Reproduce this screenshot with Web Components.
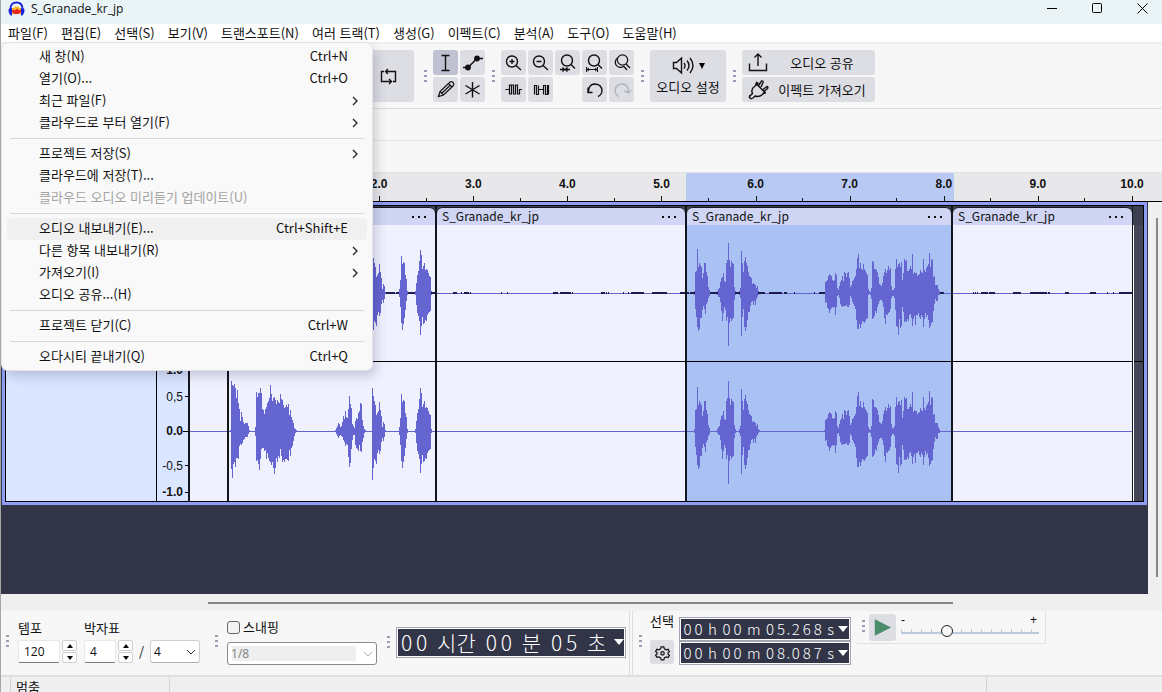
<!DOCTYPE html>
<html lang="ko">
<head>
<meta charset="utf-8">
<title>S_Granade_kr_jp</title>
<style>
html,body{margin:0;height:100%}
body{font:13px/18px "Noto Sans CJK KR",sans-serif;color:#111;overflow:hidden}
</style>
</head>
<body>
<audio-app></audio-app>
<script>
const define = (name, html, setup) => {
  const t = document.createElement('template');
  t.innerHTML = '<style>*{box-sizing:border-box}:host{display:block;box-sizing:border-box}button,input,select{font:inherit;color:inherit;margin:0;padding:0;border:0;background:none;outline:0}svg{display:block}</style>' + html;
  customElements.define(name, class extends HTMLElement {
    constructor(){
      super();
      this.attachShadow({mode:'open'}).append(t.content.cloneNode(true));
    }
    connectedCallback(){ if (setup && !this.ready){ this.ready = true; setup(this, this.shadowRoot); } }
  });
};

/* Toolbar grip: two columns of three dots */
define('drag-grip', `<style>
:host{width:7px;height:13px;flex:none;
background:conic-gradient(from 90deg at 2px 2px,transparent 0 270deg,#9c9cb4 0) 0 0/5px 5px}
</style>`);

/* Icons */
const ICONS = {
  loop:['0 0 25 25','<path d="M8 7.500H5.500V17.500H15.500M17 17.500H19.500V7.500H9.500M12 5 9.500 7.500l2.500 2.500M13 15l2.500 2.500-2.500 2.500"/>'],
  beam:['0 0 25 25','<path d="M8.500 5.500h8M8.500 20.500h8M12.500 5.500v15"/>'],
  envelope:['0 0 25 25','<path d="M3 17.500h5l9-9h6"/><g fill="currentColor"><circle cx="8" cy="17.500" r="2.200"/><circle cx="17" cy="8.500" r="2.200"/></g>'],
  pencil:['0 0 25 25','<g stroke-width="1.200"><path d="M5.500 19.500l1.500-5L17 5q1.500-1 3 .5t.5 3L10.500 18zM7 14.500l3.500 3.500M15.500 6.500l3.500 3.500M9 16l8-7.500"/></g>'],
  multi:['0 0 25 25','<path d="M12.500 5v15.500M5.500 8.500l14 8.500M19.500 8.500l-14 8.500"/>'],
  zoomin:['0 0 25 25','<circle cx="11" cy="11.500" r="5.500"/><path d="M15 15.500l5 4.500M8.500 11.500h5M11 9v5"/>'],
  zoomout:['0 0 25 25','<circle cx="11" cy="11.500" r="5.500"/><path d="M15 15.500l5 4.500M8.500 11.500h5"/>'],
  zoomsel:['0 0 25 25','<circle cx="12" cy="10.500" r="5.500"/><path d="M16 14.500l4 4M5 19.500h4M15 19.500h-4M7.500 17.500l2 2-2 2M12.500 17.500l-2 2 2 2"/>'],
  zoomfit:['0 0 25 25','<circle cx="12" cy="10.500" r="5.500"/><path d="M16 14.500l4 4"/><path stroke-width="1" d="M5 19.500h10M4.500 17v5M15.500 17v5M7 18l-2 1.500 2 1.500M13 18l2 1.500-2 1.500"/>'],
  zoomtog:['0 0 25 25','<g stroke-width="1.200"><circle cx="13.500" cy="10" r="5.200"/><path d="M17 14l4 4M8.500 8a5 5 0 1 0 6 8.500M14.500 16l3.500 4"/></g>'],
  trim:['0 0 25 25','<path stroke-width="1.200" d="M4.500 12.500h4v4.500h2v-9h2v9h2v-9h2v9h2v-4.500H21M8.500 13V8h2"/>'],
  silence:['0 0 25 25','<path stroke-width="1.200" d="M6.500 17.500v-9h2v9h2v-9h0v4h5v-4h2v9h2v-9h1v9M10.500 12.500v5M15.500 12.500v5"/>'],
  undo:['0 0 25 25','<path d="M6 10.500v5h4.500M6.500 15q0-8 6.500-8 7 .5 7 7-.5 4-4 5.500"/>'],
  redo:['0 0 25 25','<path d="M22 13l-2.500 3-4-2M19.500 15.500q0-8.500-6.500-8.500-7 .5-7 7 .5 4 4 5.500"/>'],
  speaker:['0 0 25 25','<path d="M2.500 9.500h3l5-4.500v15l-5-4.500h-3zM13 10q2 2.500 0 5.500M16 7.500q4 5 0 10M19 5q6 7.500 0 15"/>'],
  share:['0 0 25 25','<path d="M4.500 13.500v7h17v-7M13 16V4M9.500 7.500 13 4l3.500 3.500"/>'],
  plug:['0 0 25 25','<path d="M4.500 20.500q-.5-1.500 1.500-2.500l1.500-1.500q-2-4.500 2-7L12 7.500l7.500 7.500-2 2.500q-3.500 3-7.500 1.500l-2 2q-2 1.500-3.500-.5zM13.500 8.500l3-4.500q2-.5 1.500 1.500l-2 4.500M18 12.500l4-3q1.500.5.500 2l-3.500 3M10.500 8.500l1-3 2 1M18.500 16.500l2.500-1"/>'],
  gear:['-2 -2 29 29','<path d="M11 6h3l.7 2.300 2 1.100 2.300-.6 1.500 2.600-1.700 1.600v1.200l1.700 1.500-1.500 2.600-2.300-.6-2 1.100L14 21h-3l-.7-2.300-2-1.100-2.300.6-1.500-2.600 1.700-1.500v-1.200l-1.700-1.600L6 8.800l2.300.6 2-1.100z"/><circle cx="12.500" cy="13.500" r="2"/>'],
  play:['0 0 25 25','<path d="M5.500 5.500v14l14-7z" fill="#4a8c6c" stroke="#4a8c6c"/>']
};
define('tool-icon', `<style>:host{width:25px;height:25px;flex:none}</style><svg width="25" height="25" fill="none" stroke="currentColor" stroke-width="1.400"></svg>`,
(el, r) => { const [vb, p] = ICONS[el.getAttribute('name')]; const s = r.querySelector('svg'); s.setAttribute('viewBox', vb); s.innerHTML = p; });

define('tool-button', `<style>
:host{width:25px;height:25px}
button{width:100%;height:100%;background:#dddee4;border-radius:3px;display:flex;align-items:center;justify-content:center}
:host([on]) button{background:#bfc1d0}
:host([off]) button{color:#b3b4bd}
</style><button><slot></slot></button>`,
(el, r) => r.querySelector('button').setAttribute('aria-label', el.getAttribute('label')));

/* Window chrome */
define('title-bar', `<style>
:host{display:flex;height:24px;padding:0 14px 6px 7px;align-items:center;background:#eaf4f7;font:12px/18px "Open Sans","Noto Sans",sans-serif}
span{margin-left:6px;flex:1}
div{display:flex;gap:34px}
button{width:11px;height:12px}
</style>
<svg width="17" height="16" viewBox="0 0 17 16"><path d="M3 9q1-3 3-2l1.500-2 1 1 1.500-1 1.500 2q2-1 3 3v3H3z" fill="#ffb52e"/><path d="M3.500 10l2-1.500 1.500 1 2-2 2 2 2-1 1 2-4 2.500H6z" fill="#e8261c"/><path d="M2.500 8Q2.500 1.500 8.500 1.500T14.500 8" fill="none" stroke="#1a22dc" stroke-width="1.800"/><path d="M1 7.500l3-.5v7.500H2.500Q-.5 11 1 7.500zM16 7.500l-3-.5v7.500h1.500q3-3.500 1.500-7z" fill="#1a22dc"/></svg>
<span>S_Granade_kr_jp</span>
<div>
<button aria-label="최소화"><svg width="11" height="12"><path d="M0 5.500h10" stroke="#000"/></svg></button>
<button aria-label="최대화"><svg width="11" height="12"><rect x=".5" y=".5" width="9" height="9" rx="1" fill="none" stroke="#000"/></svg></button>
<button aria-label="닫기"><svg width="11" height="12"><path d="M.5 .5l10 10M10.500 .5l-10 10" stroke="#000"/></svg></button>
</div>`);

define('menu-bar', `<style>
:host{display:flex;height:20px;background:#fff;border-bottom:2px solid #efefef}
button{padding:0 6px 0 7px;height:18px;line-height:18px;white-space:nowrap}
button:first-child{background:#f9f9f9}
</style>`, (el, r) => {
  for (const n of ['파일(F)','편집(E)','선택(S)','보기(V)','트랜스포트(N)','여러 트랙(T)','생성(G)','이펙트(C)','분석(A)','도구(O)','도움말(H)']){
    const b = document.createElement('button'); b.textContent = n; r.append(b);
  }
});

define('menu-item', `<style>
:host{margin:0 5px}
button{display:flex;width:100%;height:22px;align-items:center;padding:0 8px 2px 32px;border-radius:4px;text-align:left;white-space:nowrap}
:host([current]) button{background:#f0f0f0}
:host([disabled]) button{color:#a3a3a3}
span{flex:1}
kbd{font:inherit;margin-right:11px}
svg{display:none;margin-top:2px}
:host([sub]) svg{display:block}
:host([sub]) kbd{display:none}
</style><button><span><slot></slot></span><kbd></kbd><svg width="8" height="10" viewBox="0 0 8 10"><path d="M2 1l4 4-4 4" fill="none" stroke="#222" stroke-width="1.300"/></svg></button>`,
(el, r) => { const k = el.getAttribute('keys'); k ? r.querySelector('kbd').textContent = k : r.querySelector('kbd').remove(); });

define('file-menu', `<style>
:host{position:absolute;left:1px;top:43px;width:370px;padding:3px 0 2px;background:#f9f9f9;border-radius:6px;box-shadow:0 0 0 1px #e3e3e6,4px 6px 12px rgba(0,0,40,.18);z-index:2}
hr{margin:4px 8px;border:0;height:1px;background:#d8d8d8}
</style>
<menu-item keys="Ctrl+N">새 창(N)</menu-item>
<menu-item keys="Ctrl+O">열기(O)...</menu-item>
<menu-item sub>최근 파일(F)</menu-item>
<menu-item sub>클라우드로 부터 열기(F)</menu-item>
<hr>
<menu-item sub>프로젝트 저장(S)</menu-item>
<menu-item>클라우드에 저장(T)...</menu-item>
<menu-item disabled>클라우드 오디오 미리듣기 업데이트(U)</menu-item>
<hr>
<menu-item current keys="Ctrl+Shift+E">오디오 내보내기(E)...</menu-item>
<menu-item sub>다른 항목 내보내기(R)</menu-item>
<menu-item sub>가져오기(I)</menu-item>
<menu-item>오디오 공유...(H)</menu-item>
<hr>
<menu-item keys="Ctrl+W">프로젝트 닫기(C)</menu-item>
<hr>
<menu-item keys="Ctrl+Q">오다시티 끝내기(Q)</menu-item>`);

/* Top toolbars */
define('tool-bars', `<style>
:host{background:#f7f7f7}
.row{display:flex;align-items:center;height:65px;border-bottom:1px solid #dcdce2;gap:4px}
.blank{height:32px;border-bottom:1px solid #e2e2e6}
.transport{width:413px;display:flex;justify-content:flex-end;margin-right:4px}
.transport tool-button{width:52px;height:52px}
.grid{display:grid;grid-auto-flow:column;grid-template-rows:25px 25px;gap:2px}
.grid.tools,.grid.edit,.setup{margin-right:1px}
.setup{width:76px;height:52px}
.col{display:flex;flex-direction:column;align-items:center;padding-bottom:3px}
.col>div{display:flex;align-items:center;gap:3px}
.col>span{line-height:18px}
.wide{width:133px}
.wide span{flex:1;text-align:center}
.wide tool-icon{margin-left:3px}
.in{display:flex;width:133px;align-items:center;padding-right:1px}
</style>
<div class="row">
 <div class="transport"><tool-button label="반복"><tool-icon name="loop"></tool-icon></tool-button></div>
 <drag-grip></drag-grip>
 <div class="grid tools">
  <tool-button on label="선택 도구"><tool-icon name="beam"></tool-icon></tool-button>
  <tool-button label="그리기"><tool-icon name="pencil"></tool-icon></tool-button>
  <tool-button label="엔벨로프"><tool-icon name="envelope"></tool-icon></tool-button>
  <tool-button label="멀티 도구"><tool-icon name="multi"></tool-icon></tool-button>
 </div>
 <drag-grip></drag-grip>
 <div class="grid edit">
  <tool-button label="확대"><tool-icon name="zoomin"></tool-icon></tool-button>
  <tool-button label="잘라내기"><tool-icon name="trim"></tool-icon></tool-button>
  <tool-button label="축소"><tool-icon name="zoomout"></tool-icon></tool-button>
  <tool-button label="무음"><tool-icon name="silence"></tool-icon></tool-button>
  <tool-button label="선택 맞춤"><tool-icon name="zoomsel"></tool-icon></tool-button>
  <i></i>
  <tool-button label="창 맞춤"><tool-icon name="zoomfit"></tool-icon></tool-button>
  <tool-button label="실행 취소"><tool-icon name="undo"></tool-icon></tool-button>
  <tool-button label="확대 전환"><tool-icon name="zoomtog"></tool-icon></tool-button>
  <tool-button off label="다시 실행"><tool-icon name="redo"></tool-icon></tool-button>
 </div>
 <drag-grip></drag-grip>
 <tool-button class="setup" label="오디오 설정"><div class="col"><div><tool-icon name="speaker"></tool-icon><svg width="6" height="6"><path d="M0 0h6L3 6z"/></svg></div><span>오디오 설정</span></div></tool-button>
 <drag-grip></drag-grip>
 <div class="grid">
  <tool-button class="wide" label="오디오 공유"><div class="in"><tool-icon name="share"></tool-icon><span>오디오 공유</span></div></tool-button>
  <tool-button class="wide" label="이펙트 가져오기"><div class="in"><tool-icon name="plug"></tool-icon><span>이펙트 가져오기</span></div></tool-button>
 </div>
</div>
<div class="blank"></div>
<div class="blank"></div>`);

/* Timeline */
define('time-ruler', `<style>
:host{--s:calc(100% - 220px);display:grid;grid-template-columns:190px repeat(10,1fr) 30px;height:29px;border-bottom:1px solid #000;
font:bold 12px/14px "Liberation Sans",sans-serif;
background:linear-gradient(90deg,transparent calc(190px + var(--s)*.526),#b8caf4 0 calc(190px + var(--s)*.8105),transparent 0) #e8e8ea}
div{background:linear-gradient(#111,#111) 0 100%/1px 5px no-repeat,linear-gradient(#111,#111) 50% 100%/1px 3px no-repeat}
div:first-child,div:nth-child(2){background:none}
div:last-child{background:linear-gradient(#111,#111) 0 100%/1px 5px no-repeat}
span{display:block;width:40px;margin:4px 0 0 -20px;text-align:center}
</style>`, (el, r) => {
  for (const n of ['','','','2.0','3.0','4.0','5.0','6.0','7.0','8.0','9.0','10.0']){
    const d = document.createElement('div');
    if (n){ const s = document.createElement('span'); s.textContent = n; d.append(s); }
    r.append(d);
  }
});

/* Peak data: "start:up/down,up/down,..." per burst, one pair per column */
const WAVES = {
 a:'1:1/1,50/38,46/47,45/33,47/31,43/36,33/27,41/27,28/28,22/15,10/13,19/14,14/12,9/9,7/8,8/6,8/6,8/6,5/3,1/1;26:4/5,39/30,34/29,38/33,38/39,43/28,38/18,22/17,21/17,17/20,22/19,24/28,28/22,30/27,33/30,46/31,37/34,30/31,33/37,34/43,31/37,27/27,31/31,29/25,28/27,37/18,32/25,31/31,26/29,23/31,24/28,26/28,24/29,27/30,16/19,21/25,14/17,11/15,8/10,3/5,2/2,1/1;106:1/1,3/3,5/5,8/7,7/5,4/4,5/5,9/6,15/9,12/11,20/15,14/13,13/14,22/26,35/36,27/32,23/18,7/9,5/4,3/4,10/14,13/17,12/18,18/20,20/14,28/20,27/21,11/11,5/7,2/2,1/1;143:43/49,35/37,30/28,26/30,16/33,18/22,20/19,29/23,21/20,15/11,4/7,9/10,7/6,1/1;170:4/4,13/14,37/30,29/37,31/31,30/25,18/17,14/8,2/2;186:2/2,10/12,18/20,22/23,32/28,43/42,38/33,24/24,27/31,30/30,23/27,24/28,23/22,20/20,17/19,16/18,2/2',
 b:'7:2/2,21/16,22/24,44/34,26/38,30/36,28/25,26/25,15/17,20/13,30/16,30/21,21/11,17/9,6/5,3/3;30:2/2,4/4,5/4,11/9,15/18,16/28,20/20,12/14,11/17,30/28,33/24,50/53,33/30,26/25,32/28,30/26,29/25,6/7,2/2;52:2/2,5/5,42/43,30/24,21/16,32/34,36/38,30/34,27/27,21/19,17/19,16/13,15/9,9/8,10/12,9/8,8/12,5/6,7/4,2/2,1/1;137:1/1,11/10,12/9,13/15,17/16,19/20,18/17,17/15,13/14,12/15,13/14,20/22,18/14,5/3,3/2,7/5,11/11,13/13,17/14,12/13,21/13,20/13,16/12,20/14,21/14,15/12,6/3,8/5,12/9,13/11,15/13,17/16,24/27,35/36,39/36,25/31,30/35,24/31,23/28,29/29,24/30,22/28,20/26,18/25,4/2,2/1,1/2,5/6,32/26,31/25,24/23,24/18,23/20,21/14,16/11,9/8,8/7,7/7,10/9,17/14,21/25,24/31,20/21,23/22,27/20,23/19,25/16,7/5,3/3,3/3,5/5,24/17,34/33,26/34,29/42,30/26,26/35,31/33,13/14,20/19,34/29,32/28,33/29,22/26,22/28,24/22,27/21,24/25,39/33,19/26,21/23,20/32,20/22,17/22,18/20,19/24,23/26,21/22,20/24,34/34,23/26,21/20,25/24,27/22,29/27,40/35,26/33,34/30,33/29,16/18,17/11,8/6,8/8,8/8,4/2,2/2'
};
const wavePath = s => s ? s.split(';').map(b => {
  const [x, pts] = b.split(':'); let i = +x;
  return pts.split(',').map(p => { const [u, d] = p.split('/').map(Number); return `M${i++} ${-u}h1V${d}h-1z`; }).join('');
}).join('') : '';
const dashes = s => s.split(' ').map(p => { const [x, w] = p.split('+'); return `M${x} -1h${w}v2h-${w}z`; }).join('');

define('audio-clip', `<style>
:host{display:flex;flex-direction:column;min-width:0;border-left:2px solid #14161e}
header{display:flex;flex:none;align-items:center;height:18px;margin-top:1px;padding:0 7px 2px 5px;border-top:1px solid #14161e;border-radius:6px 6px 0 0;background:#cfd5f2;white-space:nowrap;overflow:hidden}
span{flex:1;font-size:12px;line-height:16px}
button{display:flex;gap:4px;padding:7px 2px 5px}
i{width:2px;height:2px;background:#111}
section{background:#eff1ff;height:136px}
section+section{height:140px;border-top:1px solid #000}
:host([selected]) section{background:#aac2f3}
svg{width:100%;height:100%}
</style>
<header><span></span><button aria-label="클립 메뉴"><i></i><i></i><i></i></button></header>
<section><svg preserveAspectRatio="none" shape-rendering="crispEdges"><path class="w" fill="#6565d2"/><path class="d" fill="#1c1c50"/></svg></section>
<section><svg preserveAspectRatio="none" shape-rendering="crispEdges"><path class="w" fill="#6565d2"/></svg></section>`,
(el, r) => {
  const w = +el.getAttribute('span');
  el.style.flex = `${w} 1 0`;
  r.querySelector('span').textContent = el.getAttribute('name') || '';
  const d = wavePath(WAVES[el.getAttribute('wave')]) + `M0 0H${w}v1H0z`;
  r.querySelectorAll('svg').forEach((s, i) => s.setAttribute('viewBox', i ? `0 -69 ${w} 139` : `0 -68 ${w} 136`));
  r.querySelectorAll('.w').forEach(p => p.setAttribute('d', d));
  r.querySelector('.d').setAttribute('d', dashes(el.getAttribute('dash')));
});

define('amp-ruler', `<style>
:host{display:grid;grid-template-rows:18fr 35fr 34fr 35fr 18fr;font:12px/14px "Liberation Sans",sans-serif;height:140px}
div{display:flex;align-items:center;justify-content:flex-end;gap:2px}
div::after{content:"";width:3px;height:1px;background:#000}
.b{font-weight:bold}
.m::after{width:5px}
.m{gap:0}
</style>
<div class="b">1.0</div><div>0,5</div><div class="b m">0.0</div><div>-0,5</div><div class="b">-1.0</div>`);

define('track-view', `<style>
:host{display:flex;min-height:0;background:#323547}
.canvas{flex:1;min-width:0}
.track{display:grid;grid-template-columns:151px 34px 1fr;border:3px solid #8f9df6;margin:0 1px 0 1px;height:303px;background:#3d404f}
.panel,.amp{background:#dae6ff;border:1px solid #000;border-right:0}
.amp{display:flex;flex-direction:column;justify-content:flex-end;border-right:2px solid #14161e}
.wave{display:flex;min-width:0;border:solid #000;border-width:1px 1px 1px 0}
.lead{width:37px;margin-top:19px;background:#eff1ff;display:flex;flex-direction:column}
.lead i{height:136px;background:linear-gradient(#6565d2,#6565d2) 0 68px/100% 1px no-repeat}
.lead i+i{height:140px;border-top:1px solid #000;background-position:0 69px}
.tail{width:10px;margin-top:19px;background:#454759;border-left:1px solid #fff}
.tail::after{content:"";display:block;margin-top:136px;height:1px;background:#000}
.wave audio-clip:last-of-type{border-right:1px solid #14161e}
.bar{width:14px;background:#efefef;padding:16px 4px 17px 8px}
.bar div{height:100%;background:#868686}
</style>
<div class="canvas"><div class="track">
<div class="panel"></div>
<div class="amp"><amp-ruler></amp-ruler></div>
<div class="wave">
<div class="lead"><i></i><i></i></div>
<audio-clip span="206" wave="a" dash="157+9 167+3 179+7 202+4"></audio-clip>
<audio-clip name="S_Granade_kr_jp" span="248" dash="16+4 24+1 27+5 33+1 64+1 70+1 116+5 123+11 135+1 164+4 169+1 171+1 186+1 191+1 194+13 215+15 243+5"></audio-clip>
<audio-clip name="S_Granade_kr_jp" span="264" wave="b" selected dash="0+2 3+5 23+8 48+5 71+7 82+13 97+3 107+1 127+1 132+6 253+4"></audio-clip>
<audio-clip name="S_Granade_kr_jp" span="179" dash="20+1 22+1 24+1 28+7 36+6 60+8 77+17 95+2 112+4 137+6 154+1 160+1 166+13"></audio-clip>
<div class="tail"></div>
</div>
</div></div>
<div class="bar"><div></div></div>`);

define('h-scroll', `<style>
:host{height:17px;background:#efefef;padding:8px 209px 0 207px}
div{height:2px;background:#868686}
</style><div></div>`);

/* Bottom controls */
define('spin-field', `<style>
:host{display:flex;gap:2px}
input{width:var(--w,42px);height:23px;background:#fff;border:1px solid #e8e8e8;border-bottom:1px solid #7b7b7b;border-radius:2px;padding-left:5px;font:12px/18px "Open Sans",sans-serif}
div{display:flex;flex-direction:column;gap:1px}
button{width:15px;height:11px;background:#fdfdfd;border:1px solid #cfcfcf;border-radius:2px;display:flex;align-items:center;justify-content:center}
</style><input type="text"><div><button aria-label="증가"><svg width="6" height="4"><path d="M0 4l3-4 3 4z"/></svg></button><button aria-label="감소"><svg width="6" height="4"><path d="M0 0l3 4 3-4z"/></svg></button></div>`,
(el, r) => { const i = r.querySelector('input'); i.value = el.getAttribute('value'); i.setAttribute('aria-label', el.getAttribute('label')); });

define('drop-select', `<style>
:host{position:relative;height:23px}
select{appearance:none;display:block;width:100%;height:100%;background:#fff;border:1px solid #d0d0d0;border-bottom-color:#b0b0b0;border-radius:3px;padding-left:3px;font:12px/18px "Open Sans",sans-serif;opacity:1}
:host([disabled]) select{color:#808080;border-color:#8a8a8a;background:linear-gradient(#efefef,#efefef) 4px 3px/calc(100% - 24px) 15px no-repeat #fff}
svg{position:absolute;right:4px;top:9px}
:host([disabled]) svg{opacity:.4}
</style><select><option></option></select><svg width="10" height="6"><path d="M1 1l4 4 4-4" fill="none" stroke="#333"/></svg>`,
(el, r) => { const s = r.querySelector('select'); s.options[0].textContent = el.getAttribute('value'); s.disabled = el.hasAttribute('disabled'); s.setAttribute('aria-label', el.getAttribute('label')); });

/* Time readout: every digit sits in a cell of equal width */
define('time-field', `<style>
:host{border:1px solid #a4a4b2;padding:1px;background:#fff;height:24px}
div{display:flex;align-items:center;height:100%;background:#323547;color:#fff;padding:0 1px;gap:4px;white-space:nowrap;font:300 15px/20px "Noto Sans CJK KR",sans-serif}
b{font-weight:inherit;display:inline-block;width:11px;text-align:center}
button{margin-left:auto}
svg{fill:#fff}
:host([large]){height:31px}
:host([large]) div{font-size:21px;line-height:27px;gap:8px}
:host([large]) b{width:15px}
</style><div><button aria-label="형식"><svg width="10" height="6"><path d="M0 0h10L5 6z"/></svg></button></div>`,
(el, r) => {
  const btn = r.querySelector('button');
  for (const w of el.getAttribute('value').split(' ')){
    const s = document.createElement('span');
    s.innerHTML = w.replace(/\d/g, '<b>$&</b>');
    btn.before(s);
  }
});

define('bottom-bar', `<style>
:host{display:flex;height:66px;background:#f7f7f7;border-bottom:2px solid #dedede}
.g{display:flex;align-items:center;padding:0 0 4px 3px;gap:7px}
.col{display:flex;flex-direction:column;align-items:flex-start;gap:3px}
.tempo .sig{display:flex;align-items:center;gap:6px;line-height:23px}
.g.snap{padding-left:13px}
.snap label{display:flex;align-items:center;gap:3px;line-height:20px}
input[type=checkbox]{appearance:none;width:13px;height:13px;border:1px solid #666;border-radius:3px;background:#f3f3f3}
.snap drop-select{width:150px}
.snap .col{gap:5px}
.g.time{gap:4px;border-right:1px solid #dcdcdc;padding:0 3px 2px 8px}
.time time-field{width:230px}
.g.sel{border-left:1px solid #dcdcdc;margin-left:2px;padding-left:4px;gap:5px}
.sel tool-button{width:24px;height:24px}
.sel .lab{gap:10px;padding-bottom:6px;margin-left:1px}
.sel .times{gap:0}
.sel time-field{width:172px}
.play{display:flex;align-items:flex-start;height:33px;border:solid #e0e0e4;border-width:0 1px 1px 0;padding:3px 3px 0 3px;gap:2px;margin-left:6px;width:189px}
.play tool-button{width:27px;height:27px;flex:none}
.play drag-grip{margin-top:6px}
.slide{margin-left:3px;width:138px;padding-top:1px}
.slide .ends{display:flex;justify-content:space-between;height:10px;padding-right:2px;font:12px/10px "Liberation Sans",sans-serif}
input[type=range]{appearance:none;display:block;width:138px;height:12px;background:linear-gradient(#bccbdc,#bccbdc) 0 7px/100% 2px no-repeat,repeating-linear-gradient(90deg,#bccbdc 0 1px,transparent 1px 10px) 0 4px/100% 3px no-repeat}
input[type=range]::-webkit-slider-thumb{appearance:none;width:12px;height:12px;border:1px solid #222;border-radius:50%;background:#f7f7f7}
</style>
<div class="g tempo"><drag-grip></drag-grip>
 <div class="col"><span>템포</span><spin-field value="120" label="템포"></spin-field></div>
 <div class="col"><span>박자표</span><div class="sig"><spin-field style="--w:32px" value="4" label="박자"></spin-field><span>/</span><drop-select style="width:50px" value="4" label="음표"></drop-select></div></div>
</div>
<div class="g snap"><drag-grip></drag-grip>
 <div class="col"><label><input type="checkbox">스내핑</label><drop-select disabled value="1/8" label="스내핑 간격"></drop-select></div>
</div>
<div class="g time"><drag-grip></drag-grip><time-field large value="00 시간 00 분 05 초"></time-field></div>
<div class="g sel"><drag-grip></drag-grip>
 <div class="col lab"><span>선택</span><tool-button label="선택 설정"><tool-icon name="gear"></tool-icon></tool-button></div>
 <div class="col times"><time-field value="00 h 00 m 05.268 s"></time-field><time-field value="00 h 00 m 08.087 s"></time-field></div>
</div>
<div class="play"><drag-grip></drag-grip><tool-button label="재생"><tool-icon name="play"></tool-icon></tool-button>
 <div class="slide"><div class="ends"><span>-</span><span>+</span></div><input type="range" min="0" max="100" value="32" aria-label="재생 속도"></div>
</div>`);

define('status-bar', `<style>
:host{display:flex;height:15px;background:#efefef;overflow:hidden;padding-left:9px;line-height:20px}
div{border-left:1px solid #d4d4d4;padding-left:5px}
.a{width:159px}.b{flex:1}.c{width:176px}
</style><div class="a">멈춤</div><div class="b"></div><div class="c"></div>`);

define('audio-app', `<style>
:host{position:relative;display:flex;flex-direction:column;height:100vh;border-left:1px solid #a6a6a6;overflow:hidden}
title-bar,menu-bar,tool-bars,time-ruler,h-scroll,bottom-bar,status-bar{flex:none}
track-view{flex:1}
</style>
<title-bar></title-bar><menu-bar></menu-bar><tool-bars></tool-bars><time-ruler></time-ruler>
<track-view></track-view><h-scroll></h-scroll><bottom-bar></bottom-bar><status-bar></status-bar>
<file-menu></file-menu>`);
</script>
</body>
</html>
